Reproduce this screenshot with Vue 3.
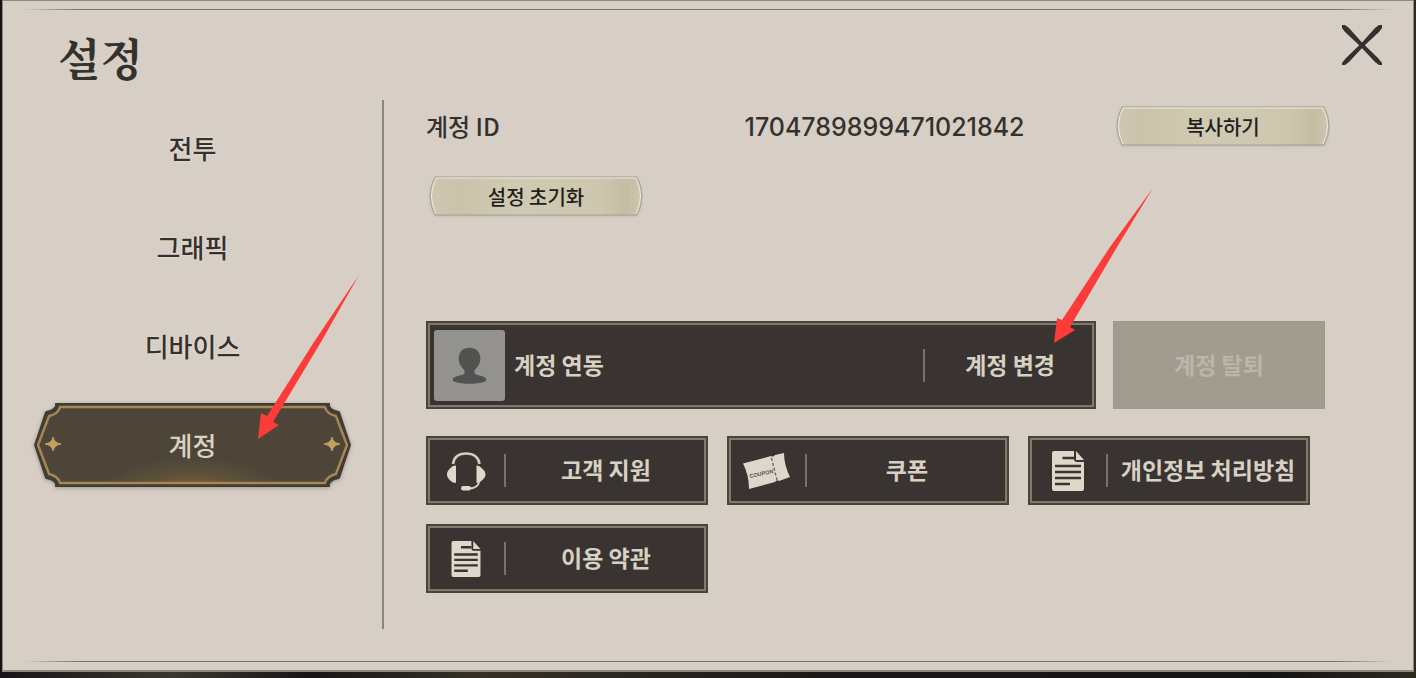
<script setup>
import { ref } from 'vue'

const tabs = ['전투', '그래픽', '디바이스', '계정']
const active = ref('계정')
const accountId = '1704789899471021842'
const tiles = [
  { label: '고객 지원', icon: 'headset' },
  { label: '쿠폰', icon: 'coupon' },
  { label: '개인정보 처리방침', icon: 'doc', size: 42 },
  { label: '이용 약관', icon: 'doc', size: 38 },
]
</script>

<template>
  <div class="screen">
    <main class="panel">
      <header class="head">
        <h1>설정</h1>
        <button class="close" type="button" aria-label="닫기">
          <svg viewBox="0 0 42 42" width="42" height="42" fill="#33302d">
            <path d="M1 1H4L8 4L21 18.500L22.500 20L37 34L41 39V41H38L34 38L20 23L18.500 21.500L4 8L1 4Z" />
            <path d="M41 1H38L34 4L21 18.500L19.500 20L5 34L1 39V41H4L8 38L22 23L23.500 21.500L38 8L41 4Z" />
          </svg>
        </button>
      </header>

      <div class="body">
        <nav class="tabs">
          <button
            v-for="tab in tabs"
            :key="tab"
            type="button"
            class="tab"
            :class="{ active: tab === active }"
            @click="active = tab"
          >
            <svg v-if="tab === active" class="plate" viewBox="0 0 318 86" preserveAspectRatio="none">
              <defs>
                <radialGradient id="plate-glow" gradientUnits="userSpaceOnUse" cx="0" cy="0" r="1" gradientTransform="translate(159 88) scale(90 32)">
                  <stop offset="0" stop-color="#78633f" />
                  <stop offset=".5" stop-color="#5f513a" />
                  <stop offset="1" stop-color="#4d4638" />
                </radialGradient>
              </defs>
              <path d="M22 1H296V4Q298 8 305 9L306 10L317 43L306 76L305 77Q298 78 296 82V85H22V82Q20 78 13 77L12 76L1 43L12 10L13 9Q20 8 22 4Z" fill="#423d32" />
              <path d="M27 5H291Q293 12 302 14L313 43L302 72Q293 74 291 81H27Q25 74 16 72L5 43L16 14Q25 12 27 5Z" fill="url(#plate-glow)" stroke="#a58654" stroke-width="2.500" />
              <path d="M20 35Q21 41 28 42Q21 43 20 49Q19 43 12 42Q19 41 20 35ZM298 35Q299 41 306 42Q299 43 298 49Q297 43 290 42Q297 41 298 35Z" fill="#c0a15e" stroke="#c0a15e" />
            </svg>
            <span>{{ tab }}</span>
          </button>
        </nav>

        <section class="content">
          <div class="id-row">
            <span class="id-label">계정 ID</span>
            <span class="id-value">{{ accountId }}</span>
            <button class="pill" type="button">
              <svg class="pill-bg" viewBox="0 0 214 40" preserveAspectRatio="none">
                <defs>
                  <linearGradient id="parchment">
                    <stop offset="0" stop-color="#cfc7b0" />
                    <stop offset=".12" stop-color="#cac2aa" />
                    <stop offset=".4" stop-color="#d1cab3" />
                    <stop offset=".8" stop-color="#cec6ae" />
                    <stop offset=".93" stop-color="#c5bca2" />
                    <stop offset="1" stop-color="#cfc7b0" />
                  </linearGradient>
                </defs>
                <path d="M6 1H208Q218 20 208 39H6Q-4 20 6 1Z" fill="url(#parchment)" stroke="#a39f95" />
                <path d="M7 38Q-2 20 7 2H207Q216 20 207 38" fill="none" stroke="#eee9dd" />
              </svg>
              <span>복사하기</span>
            </button>
          </div>
          <button class="pill reset" type="button">
            <svg class="pill-bg" viewBox="0 0 214 40" preserveAspectRatio="none">
              <path d="M6 1H208Q218 20 208 39H6Q-4 20 6 1Z" fill="url(#parchment)" stroke="#a39f95" />
              <path d="M7 38Q-2 20 7 2H207Q216 20 207 38" fill="none" stroke="#eee9dd" />
            </svg>
            <span>설정 초기화</span>
          </button>

          <div class="account-row">
            <button class="card account" type="button">
              <span class="avatar">
                <svg viewBox="0 0 72 72" width="71" height="71" fill="#525251">
                  <path d="M36 18C42.500 18 47 22 47 29C47 35 43.500 38.500 41 41C40.500 44 42 45.500 45 46C50 47 53 48.500 53 50.500C53 53 45 54.500 36 54.500S19 53 19 50.500C19 48.500 22 47 27 46C30 45.500 31.500 44 31 41C28.500 38.500 25 35 25 29C25 22 29.500 18 36 18Z" />
                </svg>
              </span>
              <span class="account-name">계정 연동</span>
              <span class="bar"></span>
              <span class="account-change">계정 변경</span>
            </button>
            <button class="withdraw" type="button" disabled>계정 탈퇴</button>
          </div>

          <div class="tiles">
            <button v-for="tile in tiles" :key="tile.label" class="card tile" type="button">
              <span class="icon">
                <svg v-if="tile.icon === 'headset'" viewBox="0 0 40 40" width="40" height="40" fill="none">
                  <path d="M7 13C8 6 13 2.500 20 2.500S32.500 6 33.500 13" stroke="#d3cec0" stroke-width="2.600" />
                  <path d="M7 15L10 14.500V32L7 31.500C4 29.500 1 27 1 23.500S4 17 7 15ZM33 15L30.500 14.500V32L33 31.500C36 29.500 39.500 27 39.500 23.500S36 17 33 15Z" fill="#ddd8ca" />
                  <path d="M33.500 30C32.500 35 29 37.500 23 37.500" stroke="#d3cec0" stroke-width="1.800" />
                  <rect x="15" y="35" width="10" height="4.500" rx="2.200" fill="#ddd8ca" />
                </svg>
                <svg v-else-if="tile.icon === 'coupon'" viewBox="0 0 50 40" width="50" height="40">
                  <path d="M1 12.500L29 5Q31 6.500 33 4L42 2Q42 14 48 26L37 30Q35 28 33 31L7 38Q7 24 1 12.500Z" fill="#ddd8cb" />
                  <path d="M29.500 7L35 29" stroke="#665e56" stroke-width="1.300" stroke-dasharray="3 2" />
                  <text x="8" y="27" transform="rotate(-12 8 27)" font-family="Liberation Sans, sans-serif" font-size="5.500" fill="#5b564f">COUPON</text>
                </svg>
                <svg v-else viewBox="0 0 42 42" :width="tile.size" :height="tile.size">
                  <path d="M7 1H27V9Q27 12 30 12H37V39Q37 41 35 41H7Q5 41 5 39V3Q5 1 7 1Z" fill="#ddd8ca" />
                  <path d="M29 1L37 10H29Z" fill="#ddd8ca" />
                  <path d="M15.500 8H27M8 16H34M8 22H34M8 28H34M8 34H23" stroke="#393431" stroke-width="2.600" />
                </svg>
              </span>
              <span class="bar"></span>
              <span class="tile-label">{{ tile.label }}</span>
            </button>
          </div>
        </section>
      </div>

      <svg class="arrows" viewBox="0 0 1410 669" preserveAspectRatio="none" fill="#fd3b38" aria-hidden="true">
        <path d="M356 274L311 341L264 415L258 412L255 438L276 424L270 421L318 341Z" />
        <path d="M1150 187L1107 246L1059 319L1054 317L1051 342L1072 329L1067 326L1114 246Z" />
      </svg>
    </main>
  </div>
</template>

<style>
body {
  background: #1b1918;
}
</style>

<style scoped>
* {
  box-sizing: border-box;
}

.screen {
  min-height: 100vh;
  padding: 0 2px 6px;
  background: linear-gradient(90deg, #151316, #3a372f 12%, #171416 22%, #353127 34%, #191617 60%, #151414 90%, #2d2921);
  font-family: "Noto Sans CJK KR", sans-serif;
  color: #35312e;
}

.panel {
  position: relative;
  min-height: calc(100vh - 6px);
  border: 1px solid #8e887f;
  border-width: 1px 1px 2px;
  background: #d7cfc5;
}

.panel::before,
.panel::after {
  content: "";
  position: absolute;
  left: 20px;
  right: 20px;
  height: 1px;
  background: linear-gradient(90deg, transparent, #7a7369 4%, #7a7369 96%, transparent);
}

.panel::before {
  top: 8px;
}

.panel::after {
  bottom: 8px;
}

.arrows {
  position: absolute;
  inset: 0;
  width: 100%;
  height: 100%;
  pointer-events: none;
}

button {
  padding: 0;
  border: 0;
  background: none;
  font: inherit;
  color: inherit;
  cursor: pointer;
}

.head {
  display: flex;
  justify-content: space-between;
  align-items: flex-start;
  height: 99px;
  padding: 23px 30px 0 55px;
}

h1 {
  margin: 0;
  font-family: "Noto Serif CJK KR", "Liberation Serif", serif;
  font-size: 44px;
  line-height: 66px;
  font-weight: 700;
}

.close {
  height: 42px;
}

.close svg {
  display: block;
}

.body {
  display: flex;
}

.tabs {
  display: flex;
  flex-direction: column;
  gap: 13px;
  width: 381px;
  height: 529px;
  padding: 5px 30px 0;
  border-right: 2px solid #8b857d;
}

.tab {
  position: relative;
  height: 86px;
  padding-bottom: 2px;
  font-size: 26px;
  font-weight: 500;
  text-shadow: 0 0 2px #f4eee4;
}

.tab span {
  position: relative;
}

.tab.active {
  color: #d9d1c2;
  text-shadow: none;
}

.plate {
  position: absolute;
  inset: 0;
  width: 100%;
  height: 100%;
  filter: drop-shadow(0 1px 2px #77706599);
}

.content {
  flex: 1;
  padding: 5px 83px 0 42px;
}

.id-row {
  display: grid;
  grid-template-columns: 319fr 372fr 214px;
  align-items: center;
  height: 42px;
}

.id-label,
.id-value {
  font-size: 24px;
  font-weight: 500;
}

.id-label {
  padding-bottom: 2px;
}

.id-value {
  padding-top: 2px;
  font-family: Inter, "Noto Sans CJK KR", sans-serif;
  font-size: 25px;
}

.pill {
  position: relative;
  width: 214px;
  height: 40px;
  font-size: 20px;
  font-weight: 500;
  color: #211f1b;
}

.pill span {
  position: relative;
}

.pill-bg {
  position: absolute;
  inset: 0;
  width: 100%;
  height: 100%;
  filter: drop-shadow(0 1px 1px #a39c9066);
}

.reset {
  display: block;
  margin: 29px 0 0 3px;
}

.account-row {
  display: grid;
  grid-template-columns: 670fr 212fr;
  gap: 17px;
  margin: 105px 5px 0 0;
}

.card {
  display: flex;
  align-items: center;
  border: 2px solid #4b443b;
  background: #393431;
  box-shadow: inset 0 0 0 2px #81796b;
  color: #d8d1c2;
  font-size: 23px;
  font-weight: 700;
}

.account {
  height: 88px;
  padding: 0 39px 0 6px;
}

.avatar {
  display: flex;
  border-radius: 3px;
  background: #939290;
}

.account-name,
.account-change,
.tile-label {
  padding-bottom: 3px;
}

.account-name {
  flex: 1;
  padding-left: 9px;
  text-align: left;
}

.bar {
  width: 2px;
  height: 33px;
  background: #777168;
}

.account-change {
  padding-left: 40px;
}

.withdraw {
  padding-bottom: 3px;
  border: 1px solid #a2998b;
  background: #a19c90;
  color: #bcb5a8;
  font-size: 23px;
  font-weight: 700;
}

.tiles {
  display: grid;
  grid-template-columns: repeat(3, 1fr);
  gap: 19px;
  margin: 27px 20px 0 0;
}

.tile {
  height: 69px;
}

.icon {
  display: flex;
  justify-content: center;
  width: 76px;
}

.tile-label {
  flex: 1;
  white-space: nowrap;
}
</style>
